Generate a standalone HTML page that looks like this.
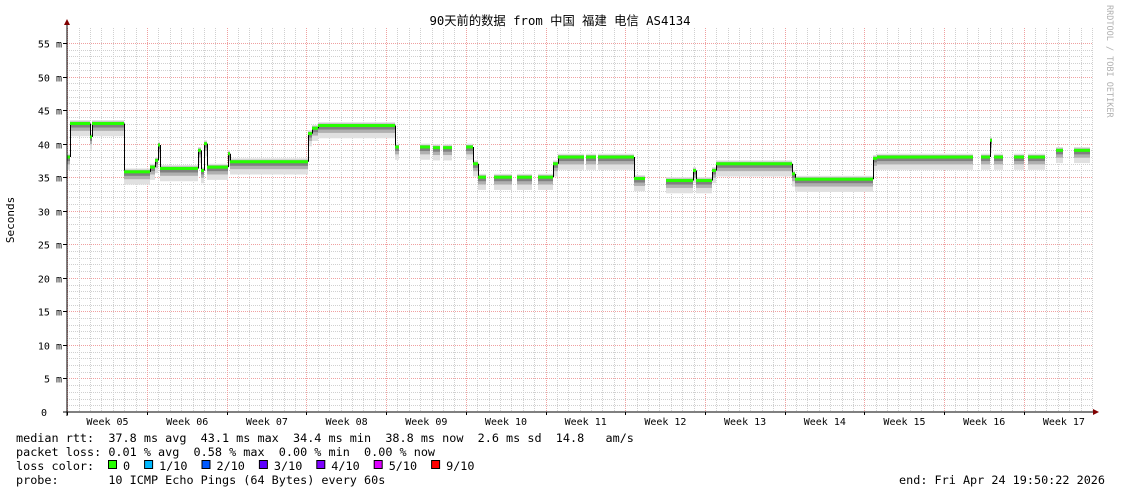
<!DOCTYPE html><html><head><meta charset="utf-8"><style>
body{margin:0;background:#fff;width:1121px;height:494px;overflow:hidden}
svg{display:block}
.t{font-family:"DejaVu Sans Mono","Liberation Mono",monospace;font-size:11.8px;fill:#000;white-space:pre}
.a{font-family:"DejaVu Sans Mono","Liberation Mono",monospace;font-size:10px;fill:#000}
</style></head><body>
<svg id="s" width="1121" height="494" xmlns="http://www.w3.org/2000/svg">
<g id="grid"></g><g id="data"></g>
<text x="560" y="25" text-anchor="middle" style="font-family:'DejaVu Sans Mono','Noto Sans CJK SC',monospace;font-size:12.3px">90天前的数据 from 中国 福建 电信 AS4134</text>
<text transform="translate(14,220) rotate(-90)" text-anchor="middle" class="a" style="font-size:11px">Seconds</text>
<text transform="translate(1107,5) rotate(90)" style="font-family:'DejaVu Sans Mono',monospace;font-size:8.5px;fill:#b0b0b0">RRDTOOL / TOBI OETIKER</text>
<line x1="63" y1="412" x2="1095" y2="412" stroke="#000"/>
<line x1="67" y1="416" x2="67" y2="22" stroke="#000"/>
<polygon points="64,25 70,25 67,19" fill="#800000"/>
<polygon points="1093,409 1093,415 1099,412" fill="#800000"/>
<text x="16" y="442" class="t">median rtt:  37.8 ms avg  43.1 ms max  34.4 ms min  38.8 ms now  2.6 ms sd  14.8   am/s</text>
<text x="16" y="456" class="t">packet loss: 0.01 % avg  0.58 % max  0.00 % min  0.00 % now</text>
<text x="16" y="470" class="t">loss color:  </text>
<text x="16" y="484" class="t">probe:       10 ICMP Echo Pings (64 Bytes) every 60s</text>
<text x="1105" y="484" class="t" text-anchor="end">end: Fri Apr 24 19:50:22 2026</text>
<g id="leg"></g>
</svg>
<script>
var NS="http://www.w3.org/2000/svg";
function el(p,n,a){var e=document.createElementNS(NS,n);for(var k in a)e.setAttribute(k,a[k]);p.appendChild(e);return e}
var g=document.getElementById('grid'),d=document.getElementById('data');
function Y(v){return 412-v*6.709}
for(var v=1;v<=55;v++){var y=Math.round(Y(v))+.5;
 el(g,'line',{x1:67,x2:1093,y1:y,y2:y,stroke:v%5?'#d0d0d0':'#f0a0a0','stroke-dasharray':'1,1'});
 if(v%5==0){el(g,'line',{x1:63,x2:67,y1:y,y2:y,stroke:'#000'});
  var t=el(g,'text',{x:62,y:y+4,'text-anchor':'end','class':'a'});t.textContent=v+' m';}}
var t0=el(g,'text',{x:47,y:416,'text-anchor':'end','class':'a'});t0.textContent='0';
for(var i=0;i<91;i++){var x=Math.round(67.3+i*11.386)+.5;if(x>1093)break;
 el(g,'line',{x1:x,x2:x,y1:28,y2:412,stroke:i%7?'#d0d0d0':'#f0a0a0','stroke-dasharray':'1,1'});
 if(i%7==0)el(g,'line',{x1:x,x2:x,y1:412,y2:415,stroke:'#000'});}
for(var w=0;w<13;w++){var t=el(g,'text',{x:107.5+w*79.7,y:425,'text-anchor':'middle','class':'a'});t.textContent='Week '+('0'+(w+5)).slice(-2);}
var S=[[67,70,38],[70,90,43],[90,92,41],[92,124,43],[124,150,35.8],[150,155,36.5],[155,158,37.5],[158,160,39.8],[160,198,36.3],[198,201,39],[201,204,36],[204,207,40],[207,228,36.5],[228,230,38.5],[230,308,37.3],[308,312,41.5],[312,318,42.3],[318,395,42.7],[395,399,39.5],
[420,430,39.5],[433,440,39.4],[443,452,39.4],[466,473,39.5],[473,478,37],[478,486,35],[494,512,35],[517,532,35],[538,553,35],[553,558,37],[558,584,38],[586,596,38],[598,634,38],[634,645,34.8],[666,693,34.5],[693,696,36],[696,712,34.5],[712,716,36],[716,792,37],[792,795,35.5],[795,873,34.7],[873,877,37.8],[877,973,38],[981,990,38],[990,992,40.5],[994,1003,38],[1014,1024,38],[1028,1045,38],[1056,1063,39],[1074,1090,39]];
var prev=null;
S.forEach(function(s){
 el(d,'rect',{x:s[0],y:Y(s[2]+0.5),width:s[1]-s[0],height:6.709*2.4,fill:'#e0e0e0'});
 el(d,'rect',{x:s[0],y:Y(s[2]+0.3),width:s[1]-s[0],height:6.709*1.4,fill:'#b0b0b0'});
 el(d,'rect',{x:s[0],y:Y(s[2]),width:s[1]-s[0],height:6.709*0.6,fill:'#808080'});
});
S.forEach(function(s){
 if(prev&&prev[1]==s[0])el(d,'line',{x1:s[0]+.5,x2:s[0]+.5,y1:Y(prev[2]),y2:Y(s[2]),stroke:'#000'});
 el(d,'rect',{x:s[0],y:Y(s[2])-1.5,width:s[1]-s[0],height:3,fill:'#26ff00'});
 prev=s;});
var L=[['#26ff00','0'],['#00b8ff','1/10'],['#0059ff','2/10'],['#5e00ff','3/10'],['#7e00ff','4/10'],['#dd00ff','5/10'],['#ff0000','9/10']];
var lg=document.getElementById('leg'),lx=108;
L.forEach(function(c){el(lg,'rect',{x:lx+.5,y:460.5,width:8,height:8,fill:c[0],stroke:'#000'});
 var t=el(lg,'text',{x:lx+15,y:470,'class':'t'});t.textContent=c[1];lx+=29+c[1].length*7.1;});
</script>
</body></html>
